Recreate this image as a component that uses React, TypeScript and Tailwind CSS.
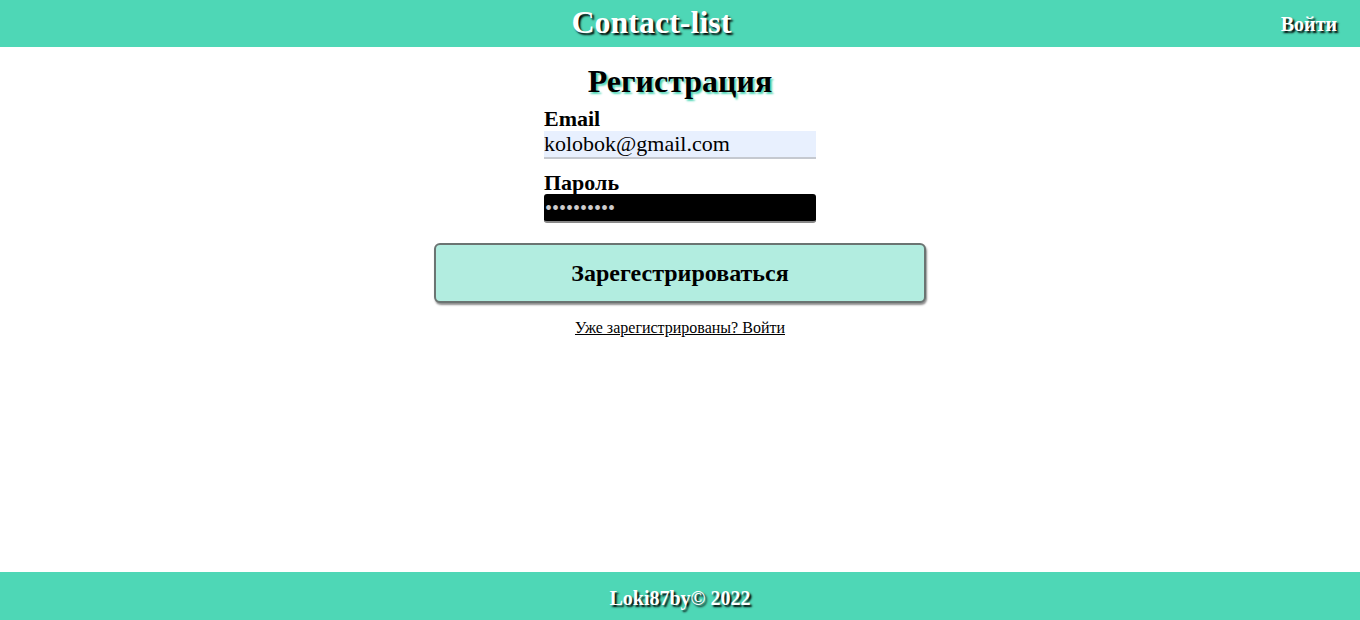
export default function App() {
  return (
    <div className="min-h-screen flex flex-col bg-white text-black font-['Liberation_Serif',serif]">
      <header className="h-[47px] bg-[#4ed7b6] flex items-center pl-[22px] pr-[23px]">
        <h1 className="flex-1 text-center text-[32px] font-bold text-white [text-shadow:2px_2px_2px_#000] leading-none pb-[3px]">
          Contact-list
        </h1>
        <a href="#" className="text-[20px] font-bold text-white [text-shadow:2px_2px_2px_#000]">
          Войти
        </a>
      </header>

      <main className="flex-1 flex flex-col items-center pt-[18px]">
        <h2 className="text-[32px] font-bold leading-[32px] [text-shadow:2px_2px_2px_#4ed7b6]">Регистрация</h2>
        <form className="flex flex-col items-center mt-[10px]">
          <label className="flex flex-col w-[272px]">
            <span className="text-[22px] font-bold leading-[24px]">Email</span>
            <input
              type="email"
              defaultValue="kolobok@gmail.com"
              className="h-[28px] bg-[#e8f0fe] text-[22px] leading-none border-b-2 border-[#c5c9d0] outline-none"
            />
          </label>
          <label className="flex flex-col w-[272px] mt-[13px]">
            <span className="text-[22px] font-bold leading-[22px]">Пароль</span>
            <input
              type="password"
              defaultValue="1234567890"
              className="h-[29px] bg-black text-[#ccc] text-[20px] rounded-[3px] border-b-2 border-[#888] outline-none px-[1px]"
            />
          </label>
          <button
            type="button"
            className="mt-[20px] w-[492px] h-[60px] bg-[#b2ede0] border-2 border-[#6b7472] rounded-[6px] shadow-[1px_2px_2px_rgba(0,0,0,0.45)] text-[24px] font-bold"
          >
            Зарегестрироваться
          </button>
          <a href="#" className="mt-[13px] text-base underline">
            Уже зарегистрированы? Войти
          </a>
        </form>
      </main>

      <footer className="h-[48px] bg-[#4ed7b6] flex items-center justify-center pt-[3px]">
        <p className="text-[20px] font-bold text-white [text-shadow:2px_2px_2px_#000]">Loki87by© 2022</p>
      </footer>
    </div>
  )
}
